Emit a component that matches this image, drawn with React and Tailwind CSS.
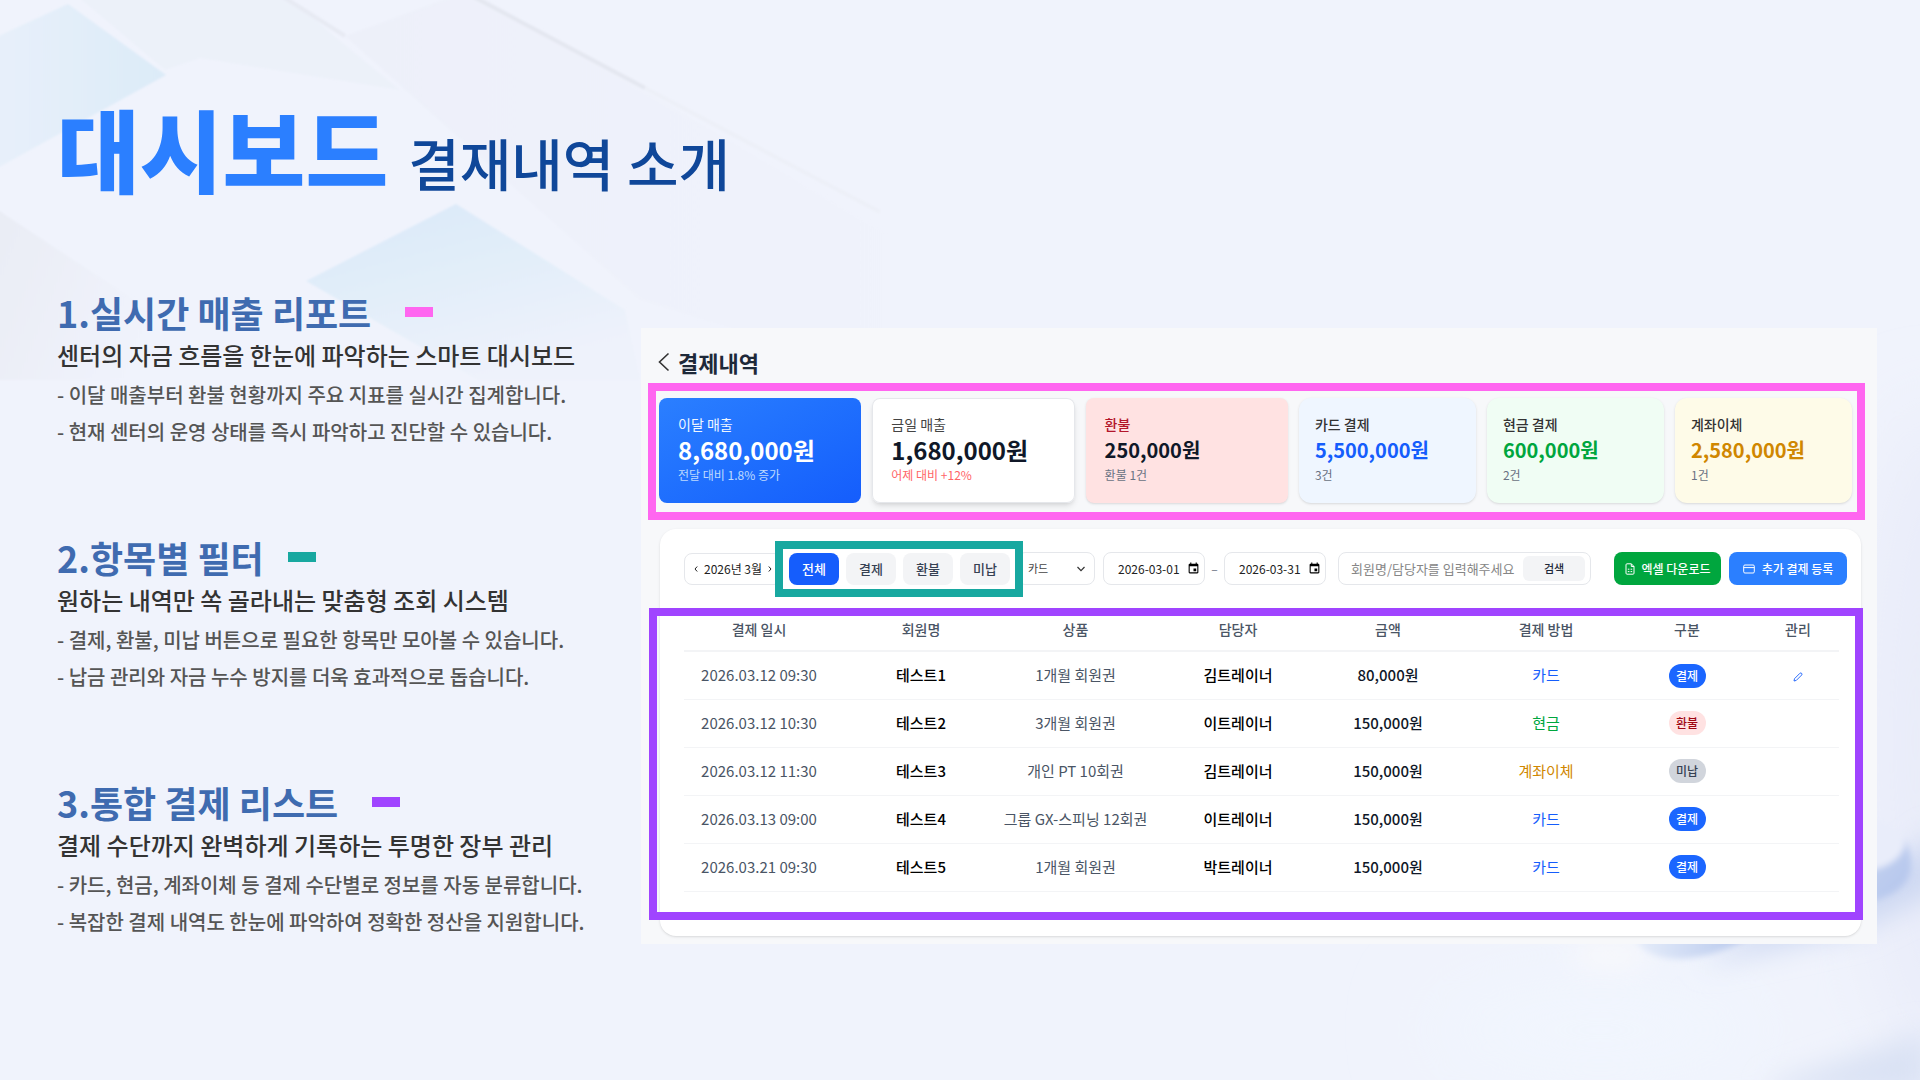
import { useState } from "react";
import { MdEvent } from "react-icons/md";

const sections = [
  {
    title: "1.실시간 매출 리포트",
    mark: "bg-[#ff66f0] ml-[34px]",
    summary: "센터의 자금 흐름을 한눈에 파악하는 스마트 대시보드",
    lines: [
      "- 이달 매출부터 환불 현황까지 주요 지표를 실시간 집계합니다.",
      "- 현재 센터의 운영 상태를 즉시 파악하고 진단할 수 있습니다.",
    ],
  },
  {
    title: "2.항목별 필터",
    mark: "bg-[#18a8a0] ml-6",
    summary: "원하는 내역만 쏙 골라내는 맞춤형 조회 시스템",
    lines: [
      "- 결제, 환불, 미납 버튼으로 필요한 항목만 모아볼 수 있습니다.",
      "- 납금 관리와 자금 누수 방지를 더욱 효과적으로 돕습니다.",
    ],
  },
  {
    title: "3.통합 결제 리스트",
    mark: "bg-[#a044ff] ml-[34px]",
    summary: "결제 수단까지 완벽하게 기록하는 투명한 장부 관리",
    lines: [
      "- 카드, 현금, 계좌이체 등 결제 수단별로 정보를 자동 분류합니다.",
      "- 복잡한 결제 내역도 한눈에 파악하여 정확한 정산을 지원합니다.",
    ],
  },
];

const cards = [
  {
    label: "이달 매출",
    amount: "8,680,000원",
    note: "전달 대비 1.8% 증가",
    box: "bg-linear-to-br from-[#2b7fff] to-[#155dfc] rounded-lg px-[19px]",
    labelStyle: "text-blue-50",
    amountStyle: "text-2xl/8 text-white",
    noteStyle: "text-blue-200",
  },
  {
    label: "금일 매출",
    amount: "1,680,000원",
    note: "어제 대비 +12%",
    box: "bg-white rounded-lg px-[19px] shadow-md ring-1 ring-inset ring-gray-200",
    labelStyle: "text-[#444]",
    amountStyle: "text-2xl/8 text-gray-900",
    noteStyle: "text-[#ff6467]",
  },
  {
    label: "환불",
    amount: "250,000원",
    note: "환불 1건",
    box: "bg-[#ffe2e2] rounded-lg px-[19px] shadow",
    labelStyle: "text-[#b3152a] font-medium",
    amountStyle: "text-xl/8 text-gray-900",
    noteStyle: "text-gray-500",
  },
  {
    label: "카드 결제",
    amount: "5,500,000원",
    note: "3건",
    box: "bg-blue-50 rounded-xl px-4 shadow",
    labelStyle: "text-[#333] font-medium",
    amountStyle: "text-xl/8 text-[#155dfc]",
    noteStyle: "text-gray-500",
  },
  {
    label: "현금 결제",
    amount: "600,000원",
    note: "2건",
    box: "bg-green-50 rounded-xl px-4 shadow",
    labelStyle: "text-[#333] font-medium",
    amountStyle: "text-xl/8 text-[#00a63e]",
    noteStyle: "text-gray-500",
  },
  {
    label: "계좌이체",
    amount: "2,580,000원",
    note: "1건",
    box: "bg-[#fefbe8] rounded-xl px-4 shadow",
    labelStyle: "text-[#333] font-medium",
    amountStyle: "text-xl/8 text-[#d08700]",
    noteStyle: "text-gray-500",
  },
];

const payments = [
  { date: "2026.03.12 09:30", member: "테스트1", product: "1개월 회원권", trainer: "김트레이너", price: "80,000원", method: "카드", status: "결제" },
  { date: "2026.03.12 10:30", member: "테스트2", product: "3개월 회원권", trainer: "이트레이너", price: "150,000원", method: "현금", status: "환불" },
  { date: "2026.03.12 11:30", member: "테스트3", product: "개인 PT 10회권", trainer: "김트레이너", price: "150,000원", method: "계좌이체", status: "미납" },
  { date: "2026.03.13 09:00", member: "테스트4", product: "그룹 GX-스피닝 12회권", trainer: "이트레이너", price: "150,000원", method: "카드", status: "결제" },
  { date: "2026.03.21 09:30", member: "테스트5", product: "1개월 회원권", trainer: "박트레이너", price: "150,000원", method: "카드", status: "결제" },
];

const methodColors = {
  카드: "text-[#155dfc]",
  현금: "text-[#00a63e]",
  계좌이체: "text-[#d08700]",
};

const statusColors = {
  결제: "bg-[#1b66ff] text-white",
  환불: "bg-[#ffe2e2] text-[#9f0712]",
  미납: "bg-gray-300 text-gray-700",
};

const filters = ["전체", "결제", "환불", "미납"];

function Backdrop() {
  return (
    <svg
      className="absolute inset-0 w-full h-full"
      viewBox="0 0 1920 1080"
      preserveAspectRatio="none"
      aria-hidden="true"
    >
      <defs>
        <linearGradient id="tileA" x1="0" y1="0" x2="1" y2="0">
          <stop offset="0" stopColor="#e8f0fa" />
          <stop offset="1" stopColor="#dcebf8" />
        </linearGradient>
        <linearGradient id="tileB" x1="0" y1="0" x2="0.5" y2="1">
          <stop offset="0" stopColor="#dae8f9" />
          <stop offset="0.5" stopColor="#e2eef9" />
          <stop offset="1" stopColor="#eef2fb" />
        </linearGradient>
        <linearGradient id="shade" x1="0" y1="0" x2="1" y2="0.4">
          <stop offset="0" stopColor="#e9ecf4" />
          <stop offset="1" stopColor="#f0f3fc" />
        </linearGradient>
        <linearGradient id="haze" x1="0" y1="0" x2="1" y2="0">
          <stop offset="0" stopColor="#edf0f9" />
          <stop offset="1" stopColor="#f0f3fc" />
        </linearGradient>
        <linearGradient id="ring" x1="0" y1="0" x2="1" y2="0.6">
          <stop offset="0" stopColor="#d3dff5" />
          <stop offset="1" stopColor="#b4c5ec" />
        </linearGradient>
        <linearGradient id="rim" x1="0" y1="0" x2="1" y2="0">
          <stop offset="0" stopColor="#e6edfa" />
          <stop offset="0.6" stopColor="#c6d4f1" />
          <stop offset="1" stopColor="#b3c3ea" />
        </linearGradient>
        <filter id="soft1">
          <feGaussianBlur stdDeviation="1" />
        </filter>
        <filter id="soft3">
          <feGaussianBlur stdDeviation="3" />
        </filter>
        <filter id="soft14" x="-50%" y="-50%" width="200%" height="200%">
          <feGaussianBlur stdDeviation="14" />
        </filter>
        <filter id="soft40" x="-50%" y="-50%" width="200%" height="200%">
          <feGaussianBlur stdDeviation="40" />
        </filter>
      </defs>

      {/* glass tiles in the upper corner */}
      <g filter="url(#soft1)">
        <path d="M70 -10 L280 -10 L345 45 L400 90 L200 58 L165 70Z" fill="#ecf1f9" />
        <path d="M-10 40 L68 4 L166 75 L-10 172Z" fill="url(#tileA)" />
        <path d="M-10 205 L165 320 L168 380 L-10 380Z" fill="url(#shade)" />
        <path d="M345 36 L470 -10 L900 240 L900 380 L640 300Z" fill="url(#haze)" />
        <path d="M456 204 L625 310 L640 380 L478 380 L306 281Z" fill="url(#tileB)" />
        <path d="M282 -4 L345 36" stroke="#e7eaf3" strokeWidth="4" />
        <path d="M472 -4 L645 88" stroke="#e4e7f0" strokeWidth="4" />
        <path d="M645 88 L880 212" stroke="#edf0f8" strokeWidth="4" />
      </g>

      {/* soft rings in the lower corner */}
      <g filter="url(#soft40)">
        <ellipse cx="1940" cy="740" rx="80" ry="330" fill="#e9ecf9" />
        <ellipse cx="1600" cy="1030" rx="170" ry="50" fill="#f1f6fe" />
      </g>
      <g filter="url(#soft14)">
        <path d="M1790 905 L1860 890 L1940 830 L1940 890 L1860 930 L1700 965Z" fill="#cdd8f2" />
        <path d="M1770 1085 L1930 1030 L1930 1095 L1770 1095Z" fill="#dae2f4" />
        <ellipse cx="1610" cy="955" rx="40" ry="10" fill="#fbfafb" />
      </g>
      <g filter="url(#soft3)">
        <path d="M1800 850 L1905 840 Q1926 884 1877 900 L1800 925Z" fill="url(#ring)" />
        <path d="M1800 815 Q1900 808 1905 845 Q1900 862 1877 869 L1800 880Z" fill="#e9edfa" />
        <path d="M1635 930 Q1635 958 1680 959 Q1725 956 1760 930Z" fill="url(#rim)" />
      </g>
    </svg>
  );
}

function Section({ title, mark, summary, lines }) {
  return (
    <section className="h-[245px] font-medium">
      <div className="flex items-center">
        <h2 className="text-4xl/[44px] font-bold text-[#3f6bb0]">{title}</h2>
        <span className={`w-7 h-[10px] ${mark}`} />
      </div>
      <p className="text-2xl/[42px] text-[#333]">{summary}</p>
      {lines.map((line) => (
        <p key={line} className="text-xl/[37px] text-[#555]">
          {line}
        </p>
      ))}
    </section>
  );
}

function SummaryCard({ card }) {
  return (
    <div className={`pt-4 pb-[19px] ${card.box}`}>
      <p className={`text-sm/5 ${card.labelStyle}`}>{card.label}</p>
      <p className={`font-bold ${card.amountStyle}`}>{card.amount}</p>
      <p className={`text-xs/[18px] ${card.noteStyle}`}>{card.note}</p>
    </div>
  );
}

function DateField({ label, value }) {
  return (
    <label className="flex items-center w-[102px] h-[33px] pl-[14px] pr-1 border border-gray-200 rounded-lg">
      <input
        type="text"
        aria-label={label}
        defaultValue={value}
        className="flex-1 min-w-0 text-xs text-[#222] outline-none"
      />
      <MdEvent className="w-[13px] h-[13px] shrink-0 text-black" />
    </label>
  );
}

function Toolbar() {
  const [active, setActive] = useState("전체");

  return (
    <div className="flex items-center">
      <div className="flex items-center gap-[6px] w-[98px] h-8 pl-[9px] border border-gray-200 rounded-lg text-xs text-[#222]">
        <button type="button" aria-label="이전 달">
          <svg viewBox="0 0 4 8" className="w-1 h-2" fill="none" stroke="currentColor">
            <path d="M3.2 1.5 L1 4 L3.2 6.5" />
          </svg>
        </button>
        <span>2026년 3월</span>
        <button type="button" aria-label="다음 달">
          <svg viewBox="0 0 4 8" className="w-1 h-2" fill="none" stroke="currentColor">
            <path d="M0.8 1.5 L3 4 L0.8 6.5" />
          </svg>
        </button>
      </div>

      <div className="relative flex gap-[7px] mx-[7px]">
        {filters.map((name) => (
          <button
            key={name}
            type="button"
            onClick={() => setActive(name)}
            className={`w-[50px] h-8 rounded-lg text-[13px] font-medium ${
              active === name ? "bg-[#155dfc] text-white" : "bg-gray-100 text-gray-700"
            }`}
          >
            {name}
          </button>
        ))}
        <div className="absolute -left-[14px] -right-[13px] -inset-y-3 border-8 border-[#18a8a0] pointer-events-none" />
      </div>

      <div className="flex items-center w-[78px] h-[33px] pl-[10px] pr-2 border border-gray-200 rounded-lg">
        <select
          aria-label="결제 수단"
          className="flex-1 min-w-0 appearance-none text-[11px] text-[#444] outline-none"
        >
          <option>카드</option>
          <option>현금</option>
          <option>계좌이체</option>
        </select>
        <svg viewBox="0 0 10 6" className="w-[10px] h-[6px] text-[#333]" fill="none" stroke="currentColor" strokeWidth="1.2">
          <path d="M1.5 1 L5 4.6 L8.5 1" />
        </svg>
      </div>

      <div className="flex items-center ml-2">
        <DateField label="시작일" value="2026-03-01" />
        <span className="w-[19px] text-center text-xs text-gray-500">–</span>
        <DateField label="종료일" value="2026-03-31" />
      </div>

      <div className="flex items-center w-[253px] h-[33px] ml-3 pl-3 pr-[5px] border border-gray-200 rounded-lg">
        <input
          type="text"
          aria-label="회원명/담당자"
          placeholder="회원명/담당자를 입력해주세요"
          className="flex-1 min-w-0 text-[13px] placeholder:text-[#868686] outline-none"
        />
        <button type="button" className="w-[62px] h-[25px] rounded-md bg-gray-100 text-[11px] font-medium text-gray-800">
          검색
        </button>
      </div>

      <div className="flex gap-2 ml-auto">
        <button type="button" className="flex items-center justify-center gap-[7px] w-[107px] h-[33px] rounded-lg bg-[#00a63e] text-xs font-medium text-white">
          <svg viewBox="0 0 10 12" className="w-[10px] h-3" fill="none" stroke="currentColor">
            <path d="M6.3 0.8 H2 Q1 0.8 1 1.8 V10.2 Q1 11.2 2 11.2 H8 Q9 11.2 9 10.2 V3.5Z M6.3 0.8 V3.5 H9" />
            <path d="M2.8 6.2 H4.4 M5.6 6.2 H7.2 M2.8 8.6 H4.4 M5.6 8.6 H7.2" />
          </svg>
          엑셀 다운로드
        </button>
        <button type="button" className="flex items-center justify-center gap-[7px] w-[118px] h-[33px] rounded-lg bg-[#2b7fff] text-xs font-medium text-white">
          <svg viewBox="0 0 12 10" className="w-3 h-[10px]" fill="none" stroke="currentColor">
            <rect x="0.7" y="1" width="10.6" height="8" rx="1.2" />
            <path d="M0.7 3.6 H11.3" />
          </svg>
          추가 결제 등록
        </button>
      </div>
    </div>
  );
}

function PaymentTable() {
  return (
    <div className="relative pb-7">
      <table className="w-full table-fixed text-center whitespace-nowrap">
        <colgroup>
          <col className="w-[166px]" />
          <col className="w-[142px]" />
          <col className="w-[167px]" />
          <col className="w-[158px]" />
          <col className="w-[142px]" />
          <col className="w-[174px]" />
          <col className="w-[124px]" />
          <col className="w-[82px]" />
        </colgroup>
        <thead>
          <tr className="h-[42px] border-b-2 border-gray-100 text-sm text-gray-600 *:pb-[2px] *:font-medium">
            <th className="pr-4">결제 일시</th>
            <th>회원명</th>
            <th>상품</th>
            <th>담당자</th>
            <th>금액</th>
            <th>결제 방법</th>
            <th className="pr-4">구분</th>
            <th>관리</th>
          </tr>
        </thead>
        <tbody>
          {payments.map((row, i) => (
            <tr key={row.member} className="h-12 border-b border-gray-100 text-[15px] text-gray-600">
              <td className="pr-4">{row.date}</td>
              <td className="font-medium text-black">{row.member}</td>
              <td>{row.product}</td>
              <td className="font-medium text-black">{row.trainer}</td>
              <td className="font-medium text-gray-900">{row.price}</td>
              <td className={methodColors[row.method]}>{row.method}</td>
              <td className="pr-4">
                <span className={`inline-block w-[37px] rounded-full text-xs/6 font-medium align-middle ${statusColors[row.status]}`}>
                  {row.status}
                </span>
              </td>
              <td>
                {i === 0 && (
                  <button type="button" aria-label="수정" className="align-middle text-[#155dfc]">
                    <svg viewBox="0 0 10 10" className="w-[10px] h-[10px]" fill="none" stroke="currentColor" strokeWidth="0.9">
                      <path d="M1 9 L1.5 6.7 L7 1.2 Q7.9 0.6 8.6 1.3 Q9.4 2.1 8.7 3 L3.3 8.4Z" />
                    </svg>
                  </button>
                )}
              </td>
            </tr>
          ))}
        </tbody>
      </table>
      <div className="absolute -top-px bottom-0 -left-[35px] -right-6 border-8 border-[#a044ff] pointer-events-none" />
    </div>
  );
}

export default function App() {
  return (
    <div className="relative min-h-screen bg-[#f0f3fc] font-['Noto_Sans_CJK_KR',sans-serif]">
      <Backdrop />
      <main className="relative pl-[57px] pr-[43px]">
        <h1 className="flex items-baseline gap-5 pt-[79px] h-[290px] font-black text-[90px]/[136px] text-[#2b7fff]">
          대시보드
          <span className="text-[56px] font-medium text-[#0f4799]">결재내역 소개</span>
        </h1>

        <div className="flex items-start">
          <div className="w-[584px] shrink-0">
            {sections.map((section) => (
              <Section key={section.title} {...section} />
            ))}
          </div>

          <div className="flex-1 mt-[38px] pl-[7px] pr-3 pb-2 bg-[#f7f8fa]">
            <div className="flex items-center gap-2 h-[55px] pt-3 pl-[10px]">
              <a href="#" aria-label="뒤로">
                <svg viewBox="0 0 12 20" className="w-3 h-5" fill="none" stroke="#333" strokeWidth="1.6">
                  <path d="M10.5 1.5 L1.5 10 L10.5 18.5" />
                </svg>
              </a>
              <h2 className="text-[22px]/8 font-bold text-gray-800">결제내역</h2>
            </div>

            <div className="grid grid-cols-[8fr_8fr_8fr_7fr_7fr_7fr] gap-[11px] pt-[7px] pb-[9px] pl-[3px] pr-[5px] border-8 border-[#ff66f0]">
              {cards.map((card) => (
                <SummaryCard key={card.label} card={card} />
              ))}
            </div>

            <div className="mt-[9px] ml-3 mr-1 pt-[23px] pb-4 pl-6 pr-[14px] bg-white rounded-2xl shadow">
              <Toolbar />
              <div className="mt-6 mr-2">
                <PaymentTable />
              </div>
            </div>
          </div>
        </div>
      </main>
    </div>
  );
}
